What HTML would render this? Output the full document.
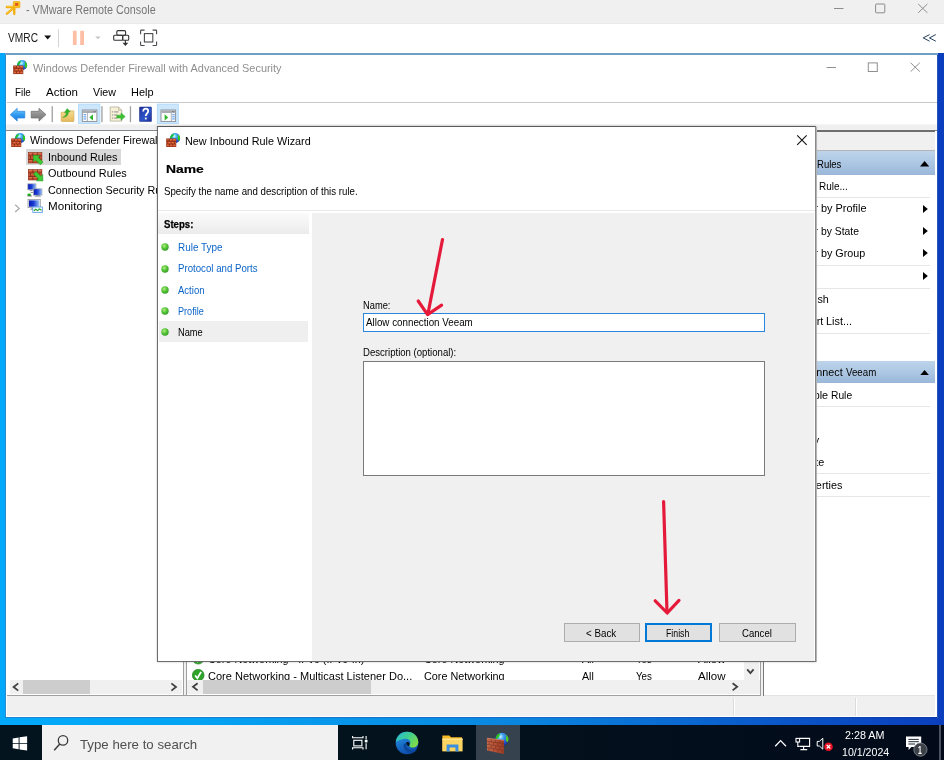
<!DOCTYPE html>
<html><head><meta charset="utf-8"><title>VMware Remote Console</title>
<style>
html,body{margin:0;padding:0;overflow:hidden;}
body{width:944px;height:760px;overflow:hidden;position:relative;background:#fff;font-family:"Liberation Sans",sans-serif;}
#r{position:absolute;left:0;top:0;width:944px;height:760px;filter:blur(0.3px);}
#r div,#r svg,#r span{position:absolute;}
.t{white-space:nowrap;line-height:1;transform-origin:0 0;display:block;}
</style></head><body><div id="r">
<div style="left:-5.00px;top:-5.00px;width:954.00px;height:29.00px;background:#f0f0f0;"></div>
<div style="left:-5.00px;top:24.00px;width:954.00px;height:29.00px;background:#ffffff;"></div>
<div style="left:-5.00px;top:23.00px;width:954.00px;height:1.00px;background:#e9e9e9;"></div>
<svg style="left:0px;top:0px" width="24" height="18" viewBox="0 0 24 18">
<g stroke="#f2ae0a" stroke-width="2.300" stroke-linecap="round" fill="none"><path d="M6.800 7H14M6.900 13.700L14 7.600M14.300 7.600V14"/></g>
<g stroke="#f9cf4a" stroke-width=".8" stroke-linecap="round" fill="none"><path d="M7 6.600H13M7.200 13L13.400 7.800"/></g>
<rect x="13.300" y="1.500" width="6.600" height="6.200" rx=".8" fill="#f8c224" stroke="#eea80a" stroke-width=".7"/>
<rect x="15.100" y="3" width="3.100" height="2.800" fill="#e2571e"/>
</svg>
<span class="t" style="left:25.80px;top:3.64px;font-size:12px;color:#767676;transform:scaleX(0.9003);">- VMware Remote Console</span>
<svg style="left:826px;top:0" width="118" height="24" viewBox="0 0 118 24">
<g stroke="#8c8c8c" stroke-width="1" fill="none">
<path d="M8 8.5H17.5"/><rect x="49.6" y="4" width="9.2" height="8.8" rx="0.8"/>
<path d="M92.2 4L101.4 12.8M101.4 4L92.2 12.8"/></g></svg>
<span class="t" style="left:8.20px;top:32.14px;font-size:12px;color:#1a1a1a;transform:scaleX(0.8517);">VMRC</span>
<svg style="left:40px;top:24px" width="130" height="29" viewBox="0 0 130 29">
<path d="M4.2 11.6H11.2L7.7 15.4Z" fill="#111"/>
<path d="M18.5 5.2V23.2" stroke="#d4d4d4" stroke-width="1"/>
<rect x="32.900" y="6.800" width="3.700" height="14.200" fill="#fdbea3"/>
<rect x="40.200" y="6.800" width="3.800" height="14.200" fill="#fdbea3"/>
<path d="M55.200 12.400H60.600L57.900 15.200Z" fill="#c4c4c4"/>
<g stroke="#333" stroke-width="1.100" fill="none">
<rect x="76.800" y="6.600" width="8.800" height="4.600" rx="1.200"/>
<rect x="73.700" y="11.200" width="9" height="5" rx="1"/>
<rect x="82.700" y="11.200" width="6" height="5" rx="1"/>
<path d="M85.400 16.200V19.500"/>
</g>
<path d="M82.500 18.700H88.300L85.400 21.900Z" fill="#333"/>
<g stroke="#4a4a4a" stroke-width="1.1" fill="none">
<rect x="104.4" y="9.6" width="8.4" height="8.4"/>
<path d="M100.6 10.2V6.9a0.8 0.8 0 0 1 .8-.8H104.6M112.6 6.1H115.8a0.8 0.8 0 0 1 .8 .8V10.2M116.6 17.4V20.7a.8 .8 0 0 1 -.8 .8H112.6M104.6 21.5H101.4a.8 .8 0 0 1 -.8 -.8V17.4"/>
</g></svg>
<svg style="left:920px;top:30px" width="20" height="16" viewBox="920 30 20 16"><path d="M929.600 34.600L923.200 37.900L929.600 41.200M935.800 34.600L929.400 37.900L935.800 41.200" fill="none" stroke="#24405c" stroke-width="1"/></svg>
<div style="left:-5.00px;top:53.00px;width:954.00px;height:712.00px;background:linear-gradient(90deg,#02a9fa 0.5%,#04a4f4 20%,#0a86e0 55%,#0a52c6 85%,#0b3ebc 100%);"></div>
<div style="left:-5.00px;top:53.00px;width:11.00px;height:671.00px;background:#02a9fa;"></div>
<div style="left:937.40px;top:53.00px;width:11.60px;height:671.80px;background:#0b3ebc;"></div>
<div style="left:5.20px;top:53.00px;width:932.40px;height:665.00px;background:#ffffff;border:1px solid #2a8bd0;border-right-color:#2a55b8;border-top:1px solid #6fa0c4;box-sizing:border-box;"></div>
<div style="left:5.20px;top:53.00px;width:932.40px;height:1.60px;background:#6fa0c4;"></div>
<svg style="left:13.2px;top:59.8px" width="14.8" height="14.8" viewBox="0 0 16 16">
<defs><radialGradient id="fg" cx=".42" cy=".3" r=".8"><stop offset="0" stop-color="#e0fcff"/><stop offset=".25" stop-color="#52c4f8"/><stop offset=".6" stop-color="#2a68e0"/><stop offset="1" stop-color="#1a38a4"/></radialGradient></defs>
<circle cx="9.800" cy="5.600" r="5.500" fill="url(#fg)"/>
<path d="M4.500 4.800C4.900 2.800 6.400 1.200 8.400 .5C8.300 1.700 8.600 2.700 7.600 3.500C6.700 4.200 6.700 5.300 5.600 5.900C5 5.800 4.600 5.400 4.500 4.800Z" fill="#1ec22a"/>
<path d="M12.600 1.700C14 2.300 15 3.700 15.200 5.300C15.300 6.600 15 7.700 14.400 8.600C13.300 8.300 12.700 7.300 12.700 6.100C12.700 5.100 13.300 4.400 12.900 3.500C12.700 2.900 12.500 2.300 12.600 1.700Z" fill="#2fd01e"/>
<rect x=".3" y="6" width="10.800" height="9.200" fill="#7e2610"/>
<rect x="0.50" y="6.40" width="3.10" height="2.400" fill="#a83c1e"/><rect x="0.80" y="6.70" width="2.20" height="1.100" fill="#d8643a"/><rect x="4.10" y="6.40" width="3.10" height="2.400" fill="#c24e2a"/><rect x="4.40" y="6.70" width="2.20" height="1.100" fill="#e8764a"/><rect x="7.70" y="6.40" width="3.10" height="2.400" fill="#c24e2a"/><rect x="8.00" y="6.70" width="2.20" height="1.100" fill="#e8764a"/><rect x="0.50" y="9.40" width="1.30" height="2.400" fill="#c24e2a"/><rect x="0.80" y="9.70" width="0.40" height="1.100" fill="#e8764a"/><rect x="2.30" y="9.40" width="3.10" height="2.400" fill="#c24e2a"/><rect x="2.60" y="9.70" width="2.20" height="1.100" fill="#e8764a"/><rect x="5.90" y="9.40" width="3.10" height="2.400" fill="#c24e2a"/><rect x="6.20" y="9.70" width="2.20" height="1.100" fill="#e8764a"/><rect x="9.50" y="9.40" width="1.40" height="2.400" fill="#c24e2a"/><rect x="9.80" y="9.70" width="0.50" height="1.100" fill="#e8764a"/><rect x="0.50" y="12.40" width="3.10" height="2.400" fill="#c24e2a"/><rect x="0.80" y="12.70" width="2.20" height="1.100" fill="#e8764a"/><rect x="4.10" y="12.40" width="3.10" height="2.400" fill="#c24e2a"/><rect x="4.40" y="12.70" width="2.20" height="1.100" fill="#e8764a"/><rect x="7.70" y="12.40" width="3.10" height="2.400" fill="#c24e2a"/><rect x="8.00" y="12.70" width="2.20" height="1.100" fill="#e8764a"/>
</svg>
<span class="t" style="left:32.80px;top:63.15px;font-size:11.4px;color:#8f8f8f;transform:scaleX(0.9573);">Windows Defender Firewall with Advanced Security</span>
<svg style="left:820px;top:56px" width="110" height="24" viewBox="0 0 110 24">
<g stroke="#8f8f8f" stroke-width="1" fill="none">
<path d="M6.600 11.500H16"/><rect x="48.300" y="6.900" width="9" height="8.600"/>
<path d="M90.600 6.800L99.800 15.600M99.800 6.800L90.600 15.600"/></g></svg>
<span class="t" style="left:15.20px;top:86.95px;font-size:11.4px;color:#000;transform:scaleX(0.8608);">File</span>
<span class="t" style="left:46.20px;top:86.95px;font-size:11.4px;color:#000;transform:scaleX(1.0097);">Action</span>
<span class="t" style="left:93.30px;top:86.95px;font-size:11.4px;color:#000;transform:scaleX(0.9343);">View</span>
<span class="t" style="left:131.30px;top:86.95px;font-size:11.4px;color:#000;transform:scaleX(0.9604);">Help</span>
<div style="left:6.50px;top:102.20px;width:930.50px;height:1.00px;background:#c8c8c8;"></div>
<div style="left:6.20px;top:123.80px;width:930.40px;height:6.20px;background:linear-gradient(180deg,#f6f6f6,#eeeeee 40%,#f0f0f0);"></div>
<svg style="left:6px;top:103px" width="190" height="22" viewBox="6 103 190 22">
<defs>
<linearGradient id="gb" x1="0" y1="0" x2="0" y2="1"><stop offset="0" stop-color="#7fd0ff"/><stop offset=".5" stop-color="#2f9bf0"/><stop offset="1" stop-color="#1a7be0"/></linearGradient>
<linearGradient id="gg" x1="0" y1="0" x2="0" y2="1"><stop offset="0" stop-color="#b4b4b4"/><stop offset=".5" stop-color="#8c8c8c"/><stop offset="1" stop-color="#777"/></linearGradient>
<linearGradient id="gf" x1="0" y1="0" x2="0" y2="1"><stop offset="0" stop-color="#f7dd95"/><stop offset="1" stop-color="#e4b95a"/></linearGradient>
<linearGradient id="gh" x1="0" y1="0" x2="1" y2="1"><stop offset="0" stop-color="#20309c"/><stop offset=".55" stop-color="#2c55c8"/><stop offset="1" stop-color="#1b2f98"/></linearGradient>
</defs>
<!-- back -->
<path d="M10.200 114.700L17.200 108.300V111.300H24.800V118H17.200V121.100Z" fill="url(#gb)" stroke="#2b86dc" stroke-width=".7" stroke-linejoin="round"/>
<!-- forward -->
<path d="M46 114.600L39 108.300V111.300H31.200V118H39V121.100Z" fill="url(#gg)" stroke="#6c6c6c" stroke-width=".7" stroke-linejoin="round"/>
<rect x="51.600" y="106.200" width="1.300" height="16" fill="#a0a0a0"/>
<!-- folder up -->
<path d="M61.200 112.200H66.400L67.600 110.800H73.200a.7 .7 0 0 1 .7 .7V120.800a.7 .7 0 0 1 -.7 .7H61.900a.7 .7 0 0 1 -.7 -.7Z" fill="url(#gf)" stroke="#cfa145" stroke-width=".6"/>
<path d="M62.600 117.400C64.800 116.800 66 115.200 66.200 112.400L64.400 112.600L67.200 108.500L70.300 111.800L68.500 112C68.300 115.400 66.400 117.400 62.600 117.400Z" fill="#35b52c" stroke="#2b9a24" stroke-width=".4"/>
<!-- hl1 -->
<rect x="78.600" y="104.100" width="21.300" height="19.500" fill="#cce6fb" stroke="#a9d6fb" stroke-width=".8"/>
<g id="winL">
<rect x="82.300" y="110" width="14.600" height="11.400" fill="#ffffff" stroke="#868b92" stroke-width=".9"/>
<rect x="82.700" y="110.400" width="13.800" height="2.600" fill="#a9adb3"/>
<rect x="93.300" y="111" width="1" height="1" fill="#777"/><rect x="94.800" y="111" width="1" height="1" fill="#777"/>
<rect x="86.900" y="113" width=".8" height="8" fill="#9a9ea4"/>
<rect x="83.500" y="114.200" width="2.600" height="1.100" fill="#5b9be8"/><rect x="83.500" y="116.300" width="2.600" height="1.100" fill="#5b9be8"/><rect x="83.500" y="118.400" width="2.600" height="1.100" fill="#5b9be8"/>
<path d="M89.400 117.400L93 114.300V120.500Z" fill="#2fb52a"/>
</g>
<rect x="101.300" y="106.200" width="1.300" height="16" fill="#a0a0a0"/>
<!-- export doc -->
<path d="M110.200 107H118.600L121.800 110.200V121.100H110.200Z" fill="#f6f1d6" stroke="#a9a58f" stroke-width=".7"/>
<path d="M118.600 107V110.200H121.800" fill="#e4dfc4" stroke="#a9a58f" stroke-width=".6"/>
<g fill="#9c9c9c"><rect x="111.900" y="111.300" width="1.400" height="1.200"/><rect x="114.200" y="111.300" width="4.200" height="1.200"/><rect x="111.900" y="114.400" width="1.400" height="1.200"/><rect x="114.200" y="114.400" width="3" height="1.200"/><rect x="111.900" y="117.500" width="1.400" height="1.200"/><rect x="114.200" y="117.500" width="3" height="1.200"/></g>
<path d="M116.800 115.200H121V112.900L125.200 116.600L121 120.300V118H116.800Z" fill="#3cc234" stroke="#2da026" stroke-width=".5"/>
<rect x="129.800" y="106.200" width="1.300" height="16" fill="#a0a0a0"/>
<!-- help -->
<rect x="139.500" y="107" width="12" height="14.500" rx=".6" fill="url(#gh)" stroke="#16237c" stroke-width=".5"/>
<path d="M143.200 111.600C143.200 109.400 144.600 108.700 145.700 108.700C147 108.700 148.200 109.500 148.200 111.100C148.200 113.300 145.800 113.500 145.800 116" fill="none" stroke="#fff" stroke-width="1.700"/>
<rect x="144.900" y="117.600" width="1.800" height="1.800" fill="#fff"/>
<!-- hl2 -->
<rect x="157.300" y="104.100" width="21" height="19.500" fill="#cce6fb" stroke="#a9d6fb" stroke-width=".8"/>
<g>
<rect x="161" y="110" width="14.600" height="11.400" fill="#ffffff" stroke="#868b92" stroke-width=".9"/>
<rect x="161.400" y="110.400" width="13.800" height="2.600" fill="#a9adb3"/>
<rect x="172" y="111" width="1" height="1" fill="#777"/><rect x="173.500" y="111" width="1" height="1" fill="#777"/>
<rect x="170.800" y="113" width=".8" height="8" fill="#9a9ea4"/>
<rect x="172.200" y="114.200" width="2.600" height="1.100" fill="#5b9be8"/><rect x="172.200" y="116.300" width="2.600" height="1.100" fill="#5b9be8"/><rect x="172.200" y="118.400" width="2.600" height="1.100" fill="#5b9be8"/>
<path d="M168.200 117.400L164.600 114.300V120.500Z" fill="#2fb52a"/>
</g>
</svg>
<div style="left:6.20px;top:130.00px;width:930.40px;height:1.00px;background:#828790;"></div>
<div style="left:6.50px;top:131.00px;width:176.00px;height:565.00px;background:#ffffff;"></div>
<svg style="left:10.8px;top:132.6px" width="14.75" height="14.75" viewBox="0 0 16 16">
<defs><radialGradient id="fg" cx=".42" cy=".3" r=".8"><stop offset="0" stop-color="#e0fcff"/><stop offset=".25" stop-color="#52c4f8"/><stop offset=".6" stop-color="#2a68e0"/><stop offset="1" stop-color="#1a38a4"/></radialGradient></defs>
<circle cx="9.800" cy="5.600" r="5.500" fill="url(#fg)"/>
<path d="M4.500 4.800C4.900 2.800 6.400 1.200 8.400 .5C8.300 1.700 8.600 2.700 7.600 3.500C6.700 4.200 6.700 5.300 5.600 5.900C5 5.800 4.600 5.400 4.500 4.800Z" fill="#1ec22a"/>
<path d="M12.600 1.700C14 2.300 15 3.700 15.200 5.300C15.300 6.600 15 7.700 14.400 8.600C13.300 8.300 12.700 7.300 12.700 6.100C12.700 5.100 13.300 4.400 12.900 3.500C12.700 2.900 12.500 2.300 12.600 1.700Z" fill="#2fd01e"/>
<rect x=".3" y="6" width="10.800" height="9.200" fill="#7e2610"/>
<rect x="0.50" y="6.40" width="3.10" height="2.400" fill="#a83c1e"/><rect x="0.80" y="6.70" width="2.20" height="1.100" fill="#d8643a"/><rect x="4.10" y="6.40" width="3.10" height="2.400" fill="#c24e2a"/><rect x="4.40" y="6.70" width="2.20" height="1.100" fill="#e8764a"/><rect x="7.70" y="6.40" width="3.10" height="2.400" fill="#c24e2a"/><rect x="8.00" y="6.70" width="2.20" height="1.100" fill="#e8764a"/><rect x="0.50" y="9.40" width="1.30" height="2.400" fill="#c24e2a"/><rect x="0.80" y="9.70" width="0.40" height="1.100" fill="#e8764a"/><rect x="2.30" y="9.40" width="3.10" height="2.400" fill="#c24e2a"/><rect x="2.60" y="9.70" width="2.20" height="1.100" fill="#e8764a"/><rect x="5.90" y="9.40" width="3.10" height="2.400" fill="#c24e2a"/><rect x="6.20" y="9.70" width="2.20" height="1.100" fill="#e8764a"/><rect x="9.50" y="9.40" width="1.40" height="2.400" fill="#c24e2a"/><rect x="9.80" y="9.70" width="0.50" height="1.100" fill="#e8764a"/><rect x="0.50" y="12.40" width="3.10" height="2.400" fill="#c24e2a"/><rect x="0.80" y="12.70" width="2.20" height="1.100" fill="#e8764a"/><rect x="4.10" y="12.40" width="3.10" height="2.400" fill="#c24e2a"/><rect x="4.40" y="12.70" width="2.20" height="1.100" fill="#e8764a"/><rect x="7.70" y="12.40" width="3.10" height="2.400" fill="#c24e2a"/><rect x="8.00" y="12.70" width="2.20" height="1.100" fill="#e8764a"/>
</svg>
<span class="t" style="left:29.80px;top:134.95px;font-size:11.4px;color:#000;transform:scaleX(0.9363);">Windows Defender Firewall with Advanced</span>
<div style="left:26.00px;top:148.90px;width:95.00px;height:15.80px;background:#d9d9d9;"></div>
<svg style="left:27.6px;top:150.7px" width="17" height="15" viewBox="0 0 17 15">
<rect x=".3" y="1.600" width="13.600" height="10.400" fill="#c5502f"/>
<g stroke="#ea9474" stroke-width=".6"><path d="M.3 2.400H13.900M.3 5.800H13.900M.3 9.300H13.900"/></g>
<g stroke="#7c2a18" stroke-width=".8"><path d="M.3 5H13.900M.3 8.500H13.900M4.800 1.600V5M9.400 1.600V5M2.500 5V8.500M7.100 5V8.500M11.700 5V8.500M4.800 8.500V12M9.400 8.500V12"/></g>
<rect x=".3" y="1.600" width="13.600" height="10.400" fill="none" stroke="#8a3018" stroke-width=".6"/>
<path d="M5.400 4.200L12 4.400L10.100 6.300L15 11.200L12.400 13.800L7.500 8.900L5.600 10.800Z" fill="#3ecb36" stroke="#279a22" stroke-width=".6" stroke-linejoin="round"/>
</svg>
<span class="t" style="left:47.70px;top:151.55px;font-size:11.4px;color:#000;transform:scaleX(0.9452);">Inbound Rules</span>
<svg style="left:27.6px;top:167.9px" width="17" height="15" viewBox="0 0 17 15">
<rect x=".3" y="1.600" width="13.600" height="10.400" fill="#c5502f"/>
<g stroke="#ea9474" stroke-width=".6"><path d="M.3 2.400H13.900M.3 5.800H13.900M.3 9.300H13.900"/></g>
<g stroke="#7c2a18" stroke-width=".8"><path d="M.3 5H13.900M.3 8.500H13.900M4.800 1.600V5M9.400 1.600V5M2.500 5V8.500M7.100 5V8.500M11.700 5V8.500M4.800 8.500V12M9.400 8.500V12"/></g>
<rect x=".3" y="1.600" width="13.600" height="10.400" fill="none" stroke="#8a3018" stroke-width=".6"/>
<path d="M14.900 12.900L14.700 6.400L12.900 8.300L8 3.500L5.500 6L10.400 10.900L8.400 12.800Z" fill="#3ecb36" stroke="#279a22" stroke-width=".6" stroke-linejoin="round"/>
</svg>
<span class="t" style="left:47.70px;top:168.05px;font-size:11.4px;color:#000;transform:scaleX(0.9555);">Outbound Rules</span>
<svg style="left:27.400px;top:182.600px" width="16" height="15.400" viewBox="0 0 16 15.400">
<defs><linearGradient id="sc" x1="0" y1="0" x2="1" y2="0"><stop offset="0" stop-color="#0a1cb4"/><stop offset=".45" stop-color="#1a3cd4"/><stop offset="1" stop-color="#9cc4f4"/></linearGradient></defs>
<rect x=".8" y=".8" width="8.200" height="6" fill="url(#sc)" stroke="#a8aeb6" stroke-width=".7"/>
<rect x="6.400" y="5.800" width="8.600" height="6.400" fill="url(#sc)" stroke="#a8aeb6" stroke-width=".7"/>
<rect x="8.600" y="12.400" width="4.400" height=".9" fill="#7a7f86"/><rect x="7.600" y="13.300" width="6.400" height=".8" fill="#a8aeb6"/>
<rect x="2.600" y="7" width="3" height=".9" fill="#8a8f96"/>
<path d="M3.600 9.400H6.200" stroke="#555" stroke-width=".7"/>
<ellipse cx="2.200" cy="11.800" rx="1.900" ry="1.300" fill="#22b41e"/>
<path d="M.4 13H5" stroke="#2a2a2a" stroke-width=".6"/>
</svg>
<span class="t" style="left:47.70px;top:184.65px;font-size:11.4px;color:#000;transform:scaleX(0.9468);">Connection Security Rules</span>
<svg style="left:13.800px;top:203.800px" width="7" height="9" viewBox="0 0 7 9"><path d="M1.200 .8L5.200 4.400L1.200 8" fill="none" stroke="#a6a6a6" stroke-width="1.200"/></svg>
<svg style="left:27.400px;top:199px" width="16.400" height="15" viewBox="0 0 16.400 15">
<rect x="1" y=".4" width="12.300" height="8.300" fill="#e4e6ea" stroke="#8a8f96" stroke-width=".7"/>
<rect x="2" y="1.400" width="10.300" height="6.300" fill="url(#sc)"/>
<rect x="4.400" y="8.900" width="4" height="1" fill="#7a7f86"/><rect x="3" y="9.900" width="5" height=".9" fill="#a8aeb6"/>
<rect x="5.800" y="8" width="9.800" height="5.500" fill="#eef6ff" stroke="#5b9be8" stroke-width=".8"/>
<path d="M6.800 11.800L8.800 10.200L10.600 11.600L12.400 10L14.600 11.200" fill="none" stroke="#28a828" stroke-width="1.100"/>
</svg>
<span class="t" style="left:47.70px;top:201.15px;font-size:11.4px;color:#000;transform:scaleX(1.0199);">Monitoring</span>
<div style="left:9.50px;top:679.70px;width:172.50px;height:14.10px;background:#f0f0f0;"></div>
<div style="left:22.90px;top:679.70px;width:66.70px;height:14.10px;background:#cdcdcd;"></div>
<svg style="left:9.500px;top:679.700px" width="173" height="14" viewBox="0 0 173 14">
<path d="M8.200 3.400L3.600 7L8.200 10.600" fill="none" stroke="#404040" stroke-width="1.800"/>
<path d="M161.400 3.400L166 7L161.400 10.600" fill="none" stroke="#404040" stroke-width="1.800"/></svg>
<div style="left:182.50px;top:131.00px;width:4.00px;height:565.00px;background:#f0f0f0;border-left:1px solid #a0a0a0;border-right:1px solid #a0a0a0;box-sizing:border-box;"></div>
<div style="left:186.50px;top:131.00px;width:573.00px;height:564.50px;background:#ffffff;"></div>
<svg style="left:192.3px;top:652.2px" width="12.400" height="12.400" viewBox="0 0 12 12">
<circle cx="6" cy="6" r="5.700" fill="#2fa32b"/><circle cx="6" cy="6" r="5.700" fill="none" stroke="#1f7d1d" stroke-width=".6"/>
<path d="M3 6.300L5.200 9L8.800 2.800" fill="none" stroke="#fff" stroke-width="1.700"/></svg>
<span class="t" style="left:207.80px;top:654.05px;font-size:11.4px;color:#000;transform:scaleX(0.9500);">Core Networking - IPv6 (IPv6-In)</span>
<span class="t" style="left:423.70px;top:654.05px;font-size:11.4px;color:#000;transform:scaleX(0.9500);">Core Networking</span>
<span class="t" style="left:581.60px;top:654.05px;font-size:11.4px;color:#000;transform:scaleX(0.9325);">All</span>
<span class="t" style="left:635.60px;top:654.05px;font-size:11.4px;color:#000;transform:scaleX(0.8557);">Yes</span>
<span class="t" style="left:697.60px;top:654.05px;font-size:11.4px;color:#000;transform:scaleX(1.0109);">Allow</span>
<svg style="left:192.3px;top:668.8px" width="12.400" height="12.400" viewBox="0 0 12 12">
<circle cx="6" cy="6" r="5.700" fill="#2fa32b"/><circle cx="6" cy="6" r="5.700" fill="none" stroke="#1f7d1d" stroke-width=".6"/>
<path d="M3 6.300L5.200 9L8.800 2.800" fill="none" stroke="#fff" stroke-width="1.700"/></svg>
<span class="t" style="left:207.80px;top:670.65px;font-size:11.4px;color:#000;transform:scaleX(0.9689);">Core Networking - Multicast Listener Do...</span>
<span class="t" style="left:423.70px;top:670.65px;font-size:11.4px;color:#000;transform:scaleX(0.9500);">Core Networking</span>
<span class="t" style="left:581.60px;top:670.65px;font-size:11.4px;color:#000;transform:scaleX(0.9325);">All</span>
<span class="t" style="left:635.60px;top:670.65px;font-size:11.4px;color:#000;transform:scaleX(0.8557);">Yes</span>
<span class="t" style="left:697.60px;top:670.65px;font-size:11.4px;color:#000;transform:scaleX(1.0109);">Allow</span>
<div style="left:743.70px;top:131.00px;width:15.80px;height:549.00px;background:#f0f0f0;"></div>
<svg style="left:743.700px;top:664px" width="16" height="14" viewBox="0 0 16 14"><path d="M3.200 5.400L6.400 9.200L9.600 5.400" fill="none" stroke="#404040" stroke-width="1.800"/></svg>
<div style="left:187.00px;top:680.00px;width:572.50px;height:13.60px;background:#f0f0f0;"></div>
<div style="left:203.30px;top:680.00px;width:168.00px;height:13.60px;background:#cdcdcd;"></div>
<svg style="left:187px;top:680px" width="573" height="14" viewBox="0 0 573 14">
<path d="M10.600 3.200L6 6.800L10.600 10.400" fill="none" stroke="#404040" stroke-width="1.800"/>
<path d="M545.600 3.200L550.200 6.800L545.600 10.400" fill="none" stroke="#404040" stroke-width="1.800"/></svg>
<div style="left:6.50px;top:695.00px;width:754.00px;height:1.20px;background:#a0a0a0;"></div>
<div style="left:759.50px;top:131.00px;width:3.50px;height:565.00px;background:#f0f0f0;border-left:1px solid #a0a0a0;box-sizing:border-box;"></div>
<div style="left:763.00px;top:131.00px;width:1.30px;height:564.50px;background:#7a7a7a;"></div>
<div style="left:764.30px;top:131.00px;width:170.90px;height:564.20px;background:#ffffff;"></div>
<div style="left:764.00px;top:130.00px;width:171.20px;height:1.60px;background:#6e6e6e;"></div>
<div style="left:764.30px;top:131.60px;width:170.90px;height:18.60px;background:#f0f0f0;"></div>
<div style="left:764.30px;top:150.20px;width:170.90px;height:0.90px;background:#b4b4b4;"></div>
<span class="t" style="left:768.00px;top:135.75px;font-size:11.4px;color:#000;transform:scaleX(0.9500);">Actions</span>
<div style="left:764.30px;top:151.30px;width:170.90px;height:23.50px;background:linear-gradient(180deg,#bdd4eb 0%,#adc7e3 50%,#9ab7d9 100%);"></div>
<span class="t" style="left:816.60px;top:158.55px;font-size:11.4px;color:#000;transform:scaleX(0.8377);">Rules</span>
<span class="t" style="left:774.45px;top:158.55px;font-size:11.4px;color:#000;transform:scaleX(0.9500);">Inbound</span>
<svg style="left:919.6px;top:161.2px" width="9.200" height="5.400" viewBox="0 0 9.200 5.400"><path d="M0 5.400L4.600 0L9.200 5.400Z" fill="#000"/></svg>
<span class="t" style="left:818.90px;top:180.55px;font-size:11.4px;color:#000;transform:scaleX(0.8742);">Rule...</span>
<span class="t" style="left:794.09px;top:180.55px;font-size:11.4px;color:#000;transform:scaleX(0.9500);">New</span>
<div style="left:768.00px;top:197.40px;width:161.50px;height:0.90px;background:#e6e6e6;"></div>
<span class="t" style="left:820.60px;top:203.35px;font-size:11.4px;color:#000;transform:scaleX(0.9592);">by Profile</span>
<span class="t" style="left:794.16px;top:203.35px;font-size:11.4px;color:#000;transform:scaleX(0.9500);">Filter</span>
<svg style="left:922.8px;top:205px" width="4.800" height="8" viewBox="0 0 4.800 8"><path d="M0 0L4.800 4L0 8Z" fill="#000"/></svg>
<span class="t" style="left:821.00px;top:226.15px;font-size:11.4px;color:#000;transform:scaleX(0.9083);">by State</span>
<span class="t" style="left:794.16px;top:226.15px;font-size:11.4px;color:#000;transform:scaleX(0.9500);">Filter</span>
<svg style="left:922.8px;top:227.1px" width="4.800" height="8" viewBox="0 0 4.800 8"><path d="M0 0L4.800 4L0 8Z" fill="#000"/></svg>
<span class="t" style="left:821.00px;top:247.95px;font-size:11.4px;color:#000;transform:scaleX(0.9443);">by Group</span>
<span class="t" style="left:794.16px;top:247.95px;font-size:11.4px;color:#000;transform:scaleX(0.9500);">Filter</span>
<svg style="left:922.8px;top:249px" width="4.800" height="8" viewBox="0 0 4.800 8"><path d="M0 0L4.800 4L0 8Z" fill="#000"/></svg>
<div style="left:768.00px;top:264.90px;width:161.50px;height:0.90px;background:#e6e6e6;"></div>
<span class="t" style="left:790.00px;top:270.75px;font-size:11.4px;color:#000;transform:scaleX(0.9500);">View</span>
<svg style="left:922.8px;top:271.9px" width="4.800" height="8" viewBox="0 0 4.800 8"><path d="M0 0L4.800 4L0 8Z" fill="#000"/></svg>
<div style="left:768.00px;top:288.00px;width:161.50px;height:0.90px;background:#e6e6e6;"></div>
<span class="t" style="left:790.80px;top:294.45px;font-size:11.4px;color:#000;transform:scaleX(0.9500);">Refresh</span>
<span class="t" style="left:826.20px;top:316.35px;font-size:11.4px;color:#000;transform:scaleX(0.9543);">List...</span>
<span class="t" style="left:792.10px;top:316.35px;font-size:11.4px;color:#000;transform:scaleX(0.9500);">Export</span>
<div style="left:768.00px;top:332.50px;width:161.50px;height:0.90px;background:#e6e6e6;"></div>
<span class="t" style="left:790.00px;top:338.95px;font-size:11.4px;color:#000;transform:scaleX(0.9500);">Help</span>
<div style="left:764.30px;top:360.90px;width:170.90px;height:22.30px;background:linear-gradient(180deg,#bdd4eb 0%,#adc7e3 50%,#9ab7d9 100%);"></div>
<span class="t" style="left:845.50px;top:367.45px;font-size:11.4px;color:#000;transform:scaleX(0.8533);">Veeam</span>
<span class="t" style="left:775.78px;top:367.45px;font-size:11.4px;color:#000;transform:scaleX(0.9500);">Allow connect</span>
<svg style="left:919.6px;top:369.8px" width="9.200" height="5.400" viewBox="0 0 9.200 5.400"><path d="M0 5.400L4.600 0L9.200 5.400Z" fill="#000"/></svg>
<span class="t" style="left:831.20px;top:389.55px;font-size:11.4px;color:#000;transform:scaleX(0.9007);">Rule</span>
<span class="t" style="left:792.28px;top:389.55px;font-size:11.4px;color:#000;transform:scaleX(0.9500);">Disable</span>
<div style="left:768.00px;top:406.00px;width:161.50px;height:0.90px;background:#e6e6e6;"></div>
<span class="t" style="left:790.00px;top:412.55px;font-size:11.4px;color:#000;transform:scaleX(0.9500);">Cut</span>
<span class="t" style="left:794.41px;top:434.65px;font-size:11.4px;color:#000;transform:scaleX(0.9500);">Copy</span>
<span class="t" style="left:792.60px;top:456.75px;font-size:11.4px;color:#000;transform:scaleX(0.9500);">Delete</span>
<div style="left:768.00px;top:472.60px;width:161.50px;height:0.90px;background:#e6e6e6;"></div>
<span class="t" style="left:792.82px;top:479.95px;font-size:11.4px;color:#000;transform:scaleX(0.9500);">Properties</span>
<div style="left:768.00px;top:495.80px;width:161.50px;height:0.90px;background:#e6e6e6;"></div>
<span class="t" style="left:790.00px;top:502.15px;font-size:11.4px;color:#000;transform:scaleX(0.9500);">Help</span>
<div style="left:7.00px;top:696.20px;width:927.70px;height:19.80px;background:#f0f0f0;"></div>
<div style="left:5.20px;top:717.00px;width:931.80px;height:1.00px;background:linear-gradient(90deg,#1d88d0,#1564c4 60%,#0a37a6);"></div>
<div style="left:764.00px;top:695.20px;width:170.70px;height:1.00px;background:#e3e3e3;"></div>
<div style="left:733.00px;top:698.00px;width:1.00px;height:18.00px;background:#dcdcdc;"></div>
<div style="left:855.00px;top:698.00px;width:1.00px;height:18.00px;background:#dcdcdc;"></div>
<div style="left:734.00px;top:698.00px;width:1.00px;height:18.00px;background:#ffffff;"></div>
<div style="left:856.00px;top:698.00px;width:1.00px;height:18.00px;background:#ffffff;"></div>
<div style="left:157.00px;top:126.00px;width:659.30px;height:535.60px;background:#ffffff;border:1px solid #6d6d6d;border-top-color:#5a5a5a;border-right-color:#8a8a8a;box-sizing:border-box;box-shadow:0 0 2px rgba(0,0,0,.25);"></div>
<div style="left:816.30px;top:127.00px;width:1.00px;height:534.60px;background:#b4b4b4;"></div>
<svg style="left:165.8px;top:132.6px" width="14.75" height="14.75" viewBox="0 0 16 16">
<defs><radialGradient id="fg" cx=".42" cy=".3" r=".8"><stop offset="0" stop-color="#e0fcff"/><stop offset=".25" stop-color="#52c4f8"/><stop offset=".6" stop-color="#2a68e0"/><stop offset="1" stop-color="#1a38a4"/></radialGradient></defs>
<circle cx="9.800" cy="5.600" r="5.500" fill="url(#fg)"/>
<path d="M4.500 4.800C4.900 2.800 6.400 1.200 8.400 .5C8.300 1.700 8.600 2.700 7.600 3.500C6.700 4.200 6.700 5.300 5.600 5.900C5 5.800 4.600 5.400 4.500 4.800Z" fill="#1ec22a"/>
<path d="M12.600 1.700C14 2.300 15 3.700 15.200 5.300C15.300 6.600 15 7.700 14.400 8.600C13.300 8.300 12.700 7.300 12.700 6.100C12.700 5.100 13.300 4.400 12.900 3.500C12.700 2.900 12.500 2.300 12.600 1.700Z" fill="#2fd01e"/>
<rect x=".3" y="6" width="10.800" height="9.200" fill="#7e2610"/>
<rect x="0.50" y="6.40" width="3.10" height="2.400" fill="#a83c1e"/><rect x="0.80" y="6.70" width="2.20" height="1.100" fill="#d8643a"/><rect x="4.10" y="6.40" width="3.10" height="2.400" fill="#c24e2a"/><rect x="4.40" y="6.70" width="2.20" height="1.100" fill="#e8764a"/><rect x="7.70" y="6.40" width="3.10" height="2.400" fill="#c24e2a"/><rect x="8.00" y="6.70" width="2.20" height="1.100" fill="#e8764a"/><rect x="0.50" y="9.40" width="1.30" height="2.400" fill="#c24e2a"/><rect x="0.80" y="9.70" width="0.40" height="1.100" fill="#e8764a"/><rect x="2.30" y="9.40" width="3.10" height="2.400" fill="#c24e2a"/><rect x="2.60" y="9.70" width="2.20" height="1.100" fill="#e8764a"/><rect x="5.90" y="9.40" width="3.10" height="2.400" fill="#c24e2a"/><rect x="6.20" y="9.70" width="2.20" height="1.100" fill="#e8764a"/><rect x="9.50" y="9.40" width="1.40" height="2.400" fill="#c24e2a"/><rect x="9.80" y="9.70" width="0.50" height="1.100" fill="#e8764a"/><rect x="0.50" y="12.40" width="3.10" height="2.400" fill="#c24e2a"/><rect x="0.80" y="12.70" width="2.20" height="1.100" fill="#e8764a"/><rect x="4.10" y="12.40" width="3.10" height="2.400" fill="#c24e2a"/><rect x="4.40" y="12.70" width="2.20" height="1.100" fill="#e8764a"/><rect x="7.70" y="12.40" width="3.10" height="2.400" fill="#c24e2a"/><rect x="8.00" y="12.70" width="2.20" height="1.100" fill="#e8764a"/>
</svg>
<span class="t" style="left:185.00px;top:135.75px;font-size:11.4px;color:#000;transform:scaleX(0.9501);">New Inbound Rule Wizard</span>
<svg style="left:795px;top:133px" width="14" height="14" viewBox="0 0 14 14"><path d="M2.200 2.300L11.700 11.800M11.700 2.300L2.200 11.800" stroke="#111" stroke-width="1.100" fill="none"/></svg>
<span class="t" style="left:165.90px;top:163.89px;font-size:11px;color:#000;font-weight:bold;transform:scaleX(1.2611);-webkit-text-stroke:0.2px #000;">Name</span>
<span class="t" style="left:163.80px;top:186.26px;font-size:10.8px;color:#000;transform:scaleX(0.8988);">Specify the name and description of this rule.</span>
<div style="left:158.00px;top:210.20px;width:657.30px;height:1.00px;background:#e9e9e9;"></div>
<div style="left:312.30px;top:212.80px;width:501.50px;height:447.80px;background:#f0f0f0;"></div>
<div style="left:158.00px;top:212.80px;width:151.40px;height:21.20px;background:linear-gradient(180deg,#fafafa 0%,#f4f4f4 45%,#ebebeb 100%);"></div>
<span class="t" style="left:163.80px;top:219.36px;font-size:10.8px;color:#000;font-weight:bold;transform:scaleX(0.8911);-webkit-text-stroke:0.25px #000;">Steps:</span>
<div style="left:158.70px;top:321.20px;width:149.30px;height:20.60px;background:#efefef;"></div>
<svg style="left:161.3px;top:243.45px" width="8" height="8" viewBox="0 0 8 8"><defs><radialGradient id="rb0" cx=".4" cy=".35" r=".7"><stop offset="0" stop-color="#b5ef8a"/><stop offset=".45" stop-color="#5cc83a"/><stop offset="1" stop-color="#2f9a22"/></radialGradient></defs><circle cx="4" cy="4" r="3.700" fill="url(#rb0)"/></svg>
<span class="t" style="left:178.20px;top:242.01px;font-size:10.8px;color:#0a64c8;transform:scaleX(0.9187);">Rule Type</span>
<svg style="left:161.3px;top:264.7px" width="8" height="8" viewBox="0 0 8 8"><defs><radialGradient id="rb1" cx=".4" cy=".35" r=".7"><stop offset="0" stop-color="#b5ef8a"/><stop offset=".45" stop-color="#5cc83a"/><stop offset="1" stop-color="#2f9a22"/></radialGradient></defs><circle cx="4" cy="4" r="3.700" fill="url(#rb1)"/></svg>
<span class="t" style="left:178.20px;top:263.26px;font-size:10.8px;color:#0a64c8;transform:scaleX(0.8950);">Protocol and Ports</span>
<svg style="left:161.3px;top:285.95px" width="8" height="8" viewBox="0 0 8 8"><defs><radialGradient id="rb2" cx=".4" cy=".35" r=".7"><stop offset="0" stop-color="#b5ef8a"/><stop offset=".45" stop-color="#5cc83a"/><stop offset="1" stop-color="#2f9a22"/></radialGradient></defs><circle cx="4" cy="4" r="3.700" fill="url(#rb2)"/></svg>
<span class="t" style="left:178.20px;top:284.51px;font-size:10.8px;color:#0a64c8;transform:scaleX(0.8826);">Action</span>
<svg style="left:161.3px;top:307.2px" width="8" height="8" viewBox="0 0 8 8"><defs><radialGradient id="rb3" cx=".4" cy=".35" r=".7"><stop offset="0" stop-color="#b5ef8a"/><stop offset=".45" stop-color="#5cc83a"/><stop offset="1" stop-color="#2f9a22"/></radialGradient></defs><circle cx="4" cy="4" r="3.700" fill="url(#rb3)"/></svg>
<span class="t" style="left:178.20px;top:305.76px;font-size:10.8px;color:#0a64c8;transform:scaleX(0.8410);">Profile</span>
<svg style="left:161.3px;top:328.45px" width="8" height="8" viewBox="0 0 8 8"><defs><radialGradient id="rb4" cx=".4" cy=".35" r=".7"><stop offset="0" stop-color="#b5ef8a"/><stop offset=".45" stop-color="#5cc83a"/><stop offset="1" stop-color="#2f9a22"/></radialGradient></defs><circle cx="4" cy="4" r="3.700" fill="url(#rb4)"/></svg>
<span class="t" style="left:178.20px;top:327.01px;font-size:10.8px;color:#000;transform:scaleX(0.8583);">Name</span>
<span class="t" style="left:363.20px;top:299.66px;font-size:10.8px;color:#000;transform:scaleX(0.8615);">Name:</span>
<div style="left:363.00px;top:313.40px;width:401.60px;height:18.60px;background:#ffffff;border:1.200px solid #2b86de;box-sizing:border-box;"></div>
<span class="t" style="left:366.20px;top:317.36px;font-size:10.8px;color:#000;transform:scaleX(0.9077);">Allow connection Veeam</span>
<span class="t" style="left:363.20px;top:346.76px;font-size:10.8px;color:#000;transform:scaleX(0.8874);">Description (optional):</span>
<div style="left:363.00px;top:360.80px;width:401.60px;height:115.60px;background:#ffffff;border:1px solid #7a7a7a;box-sizing:border-box;"></div>
<div style="left:563.60px;top:622.50px;width:76.40px;height:19.00px;background:#e1e1e1;border:1px solid #adadad;box-sizing:border-box;"></div>
<div style="left:644.80px;top:622.50px;width:67.20px;height:19.00px;background:#e1e1e1;border:2px solid #0078d7;box-sizing:border-box;"></div>
<div style="left:719.40px;top:622.50px;width:76.80px;height:19.00px;background:#e1e1e1;border:1px solid #adadad;box-sizing:border-box;"></div>
<span class="t" style="left:585.70px;top:627.66px;font-size:10.8px;color:#000;transform:scaleX(0.9079);">&lt; Back</span>
<span class="t" style="left:666.40px;top:627.66px;font-size:10.8px;color:#000;transform:scaleX(0.8115);">Finish</span>
<span class="t" style="left:742.30px;top:627.66px;font-size:10.8px;color:#000;transform:scaleX(0.8888);">Cancel</span>
<svg style="left:400px;top:225px" width="300" height="400" viewBox="400 225 300 400">
<g fill="none" stroke="#e51a3a" stroke-width="3.200" stroke-linecap="round" stroke-linejoin="round">
<path d="M442.500 239.500L428 313.500"/><path d="M418.200 301L427.600 314.600L441.600 305.200"/>
<path d="M663.600 501.500L667 612"/><path d="M655.200 600.800L667.200 613L679 600.400"/>
</g></svg>
<div style="left:-5.00px;top:724.80px;width:954.00px;height:40.20px;background:linear-gradient(90deg,#03141f 0.5%,#03121d 50%,#020a1a 100%);"></div>
<div style="left:-5.00px;top:724.80px;width:47.00px;height:40.20px;background:#03141f;"></div>
<svg style="left:12.300px;top:735px" width="16.600" height="16.600" viewBox="0 0 18 18">
<path d="M.8 3.700L7.200 2.700V8.600H.8ZM8.200 2.500L16.400 1.300V8.600H8.200ZM.8 9.600H7.200V15.500L.8 14.500ZM8.200 9.600H16.400V16.900L8.200 15.700Z" fill="#fff"/></svg>
<div style="left:42.00px;top:724.80px;width:295.60px;height:40.20px;background:#f1f1f1;"></div>
<svg style="left:50px;top:732px" width="22" height="22" viewBox="0 0 22 22">
<circle cx="13" cy="8.400" r="4.700" fill="none" stroke="#3a3a3a" stroke-width="1.300"/><path d="M9.800 12L4.200 18.200" stroke="#3a3a3a" stroke-width="1.500"/></svg>
<span class="t" style="left:80.40px;top:737.66px;font-size:13.4px;color:#505050;transform:scaleX(0.9902);">Type here to search</span>
<svg style="left:350px;top:733px" width="20" height="20" viewBox="350 733 20 20">
<g fill="none" stroke="#fff" stroke-width="1.100"><path d="M352.600 736V737.800H363V736M352.600 749.600V747.700H363V749.600"/><rect x="353.800" y="740.300" width="8.100" height="5.600"/><path d="M366.100 736V739.400M366.100 743.200V749.200"/></g>
<rect x="364.800" y="739.900" width="2.700" height="2.500" fill="#fff"/></svg>
<svg style="left:395.400px;top:731.300px" width="24" height="24" viewBox="0 0 24 24">
<defs><linearGradient id="e1" x1="0" y1="0" x2="1" y2=".6"><stop offset="0" stop-color="#27b6dc"/><stop offset=".55" stop-color="#3fcf8e"/><stop offset="1" stop-color="#7ddc48"/></linearGradient>
<linearGradient id="e2" x1="0" y1="0" x2=".4" y2="1"><stop offset="0" stop-color="#2a9cec"/><stop offset="1" stop-color="#0d4fae"/></linearGradient></defs>
<circle cx="12" cy="12" r="11.300" fill="url(#e2)"/>
<path d="M.9 10.500C1.600 4.800 6.400 .7 12 .7C18.300 .7 23.300 5.400 23.300 11C23.300 14.400 20.800 16.600 17.800 16.600C15.600 16.600 14.200 15.600 14.200 14.400C14.200 13.400 15.400 13 15.400 11.600C15.400 9.600 13.600 7.800 10.800 7.800C6.400 7.800 2.600 10.400 .9 10.500Z" fill="url(#e1)"/>
<path d="M8.600 13.800C8.400 18.200 11.600 21.800 16.200 21.800C18.600 21.800 20.800 20.600 22 19C19.400 20.200 15.600 19.800 13.200 17.600C11.600 16 11 14 11.400 12.200C10 12.200 8.700 12.800 8.600 13.800Z" fill="#0c469a"/>
<path d="M11.300 11.400C12.600 10.600 14.500 11.200 14.700 12.800C14.800 13.700 14 14.300 14.200 15.200C12.600 15 11.100 13.400 11.300 11.400Z" fill="#03121d"/>
</svg>
<svg style="left:441px;top:733px" width="23" height="20" viewBox="0 0 23 20">
<path d="M1.400 2.400H8.400L10 4.200H21V18H1.400Z" fill="#f7b928"/>
<path d="M1.400 5.600H21.600V18.400H1.400Z" fill="#fcd461"/>
<path d="M5.600 18.400V11.600H17.400V18.400H14.400V14.400H8.600V18.400Z" fill="#3b8fe0"/>
<rect x="1.400" y="5.600" width="20.200" height="1.400" fill="#fde48c"/></svg>
<div style="left:476.20px;top:724.80px;width:43.80px;height:40.20px;background:#36424d;"></div>
<svg style="left:485px;top:731px" width="26" height="24" viewBox="0 0 26 24">
<defs><radialGradient id="tg" cx=".38" cy=".3" r=".75"><stop offset="0" stop-color="#c8f4ff"/><stop offset=".3" stop-color="#45a8f0"/><stop offset=".7" stop-color="#2456d8"/><stop offset="1" stop-color="#162c9a"/></radialGradient>
<linearGradient id="tw" x1="0" y1="0" x2="1" y2="0"><stop offset="0" stop-color="#c46a4c"/><stop offset=".6" stop-color="#b04c32"/><stop offset="1" stop-color="#9a3e28"/></linearGradient></defs>
<circle cx="17" cy="8.300" r="6.500" fill="url(#tg)"/>
<path d="M10.800 7.400C11 4.800 12.800 2.800 15 2.200C14.600 3.800 15 5 13.800 6C12.800 6.900 12.600 8 11.400 8.600C11 8.300 10.800 7.900 10.800 7.400Z" fill="#2ec41e"/>
<path d="M20.200 3.400C21.800 4 23.200 5.600 23.500 7.600C23.600 9 23.300 10.200 22.600 11.200C21.400 10.800 20.800 9.600 20.800 8.200C20.800 7 21.600 6.200 21 5.200C20.700 4.600 20.300 4.100 20.200 3.400Z" fill="#4ed01e"/>
<path d="M1.900 7.200L19 9.300V23L2 19.400Z" fill="url(#tw)"/>
<g stroke="#7e3220" stroke-width=".7" fill="none" opacity=".85"><path d="M1.900 10.300L19 12.700M2 13.300L19 16.100M2 16.400L19 19.600M6.200 7.700V10.900M10.600 8.300V11.500M14.800 8.800V12.100M4 10.600V13.600M8.400 11.200V14.400M12.800 11.800V15.100M17 12.400V15.800M6.200 14V17.200M10.600 14.700V18.100M14.800 15.400V18.900M4 16.800V19.800M8.400 17.600V20.700M12.800 18.400V21.700M17 19.200V22.600"/></g>
<path d="M1.900 7.200L19 9.300" stroke="#dc8a68" stroke-width=".7"/>
</svg>
<svg style="left:770px;top:728px" width="174" height="32" viewBox="770 728 174 32">
<path d="M775.200 746.200L780.600 740.600L786 746.200" fill="none" stroke="#fff" stroke-width="1.300"/>
<g fill="none" stroke="#fff" stroke-width="1.100"><path d="M799.600 738.400H809.600V746.400H799.600"/><rect x="796" y="738.400" width="3.600" height="3.600"/><path d="M797.800 742V746.400H799.600M803.600 746.400V749.400M800.400 749.600H807.200"/></g>
<path d="M817.200 741.400H819.400L822.800 738.200V749.200L819.400 746H817.200Z" fill="none" stroke="#fff" stroke-width="1"/>
<circle cx="828.500" cy="746.700" r="4.300" fill="#e81123"/><path d="M826.700 744.900L830.300 748.500M830.300 744.900L826.700 748.500" stroke="#fff" stroke-width="1.200"/>
<path d="M906 736.400H921.200V747H911.400L908.600 750V747H906Z" fill="#fff"/>
<g stroke="#03121d" stroke-width=".9"><path d="M908.400 739.400H918.800M908.400 741.700H918.800M908.400 744H915"/></g>
<circle cx="920.400" cy="749.600" r="6.600" fill="#3c4148" stroke="#8a8f96" stroke-width=".8"/>
</svg>
<div style="left:939.20px;top:724.80px;width:1.80px;height:40.20px;background:#4b5262;"></div>
<span class="t" style="left:845.00px;top:730.07px;font-size:10.9px;color:#fff;transform:scaleX(0.9874);">2:28 AM</span>
<span class="t" style="left:842.20px;top:746.87px;font-size:10.9px;color:#fff;transform:scaleX(0.9752);">10/1/2024</span>
<span class="t" style="left:918.40px;top:745.31px;font-size:10.5px;color:#fff;font-weight:bold;transform:scaleX(0.6521);">1</span>
</div></body></html>
